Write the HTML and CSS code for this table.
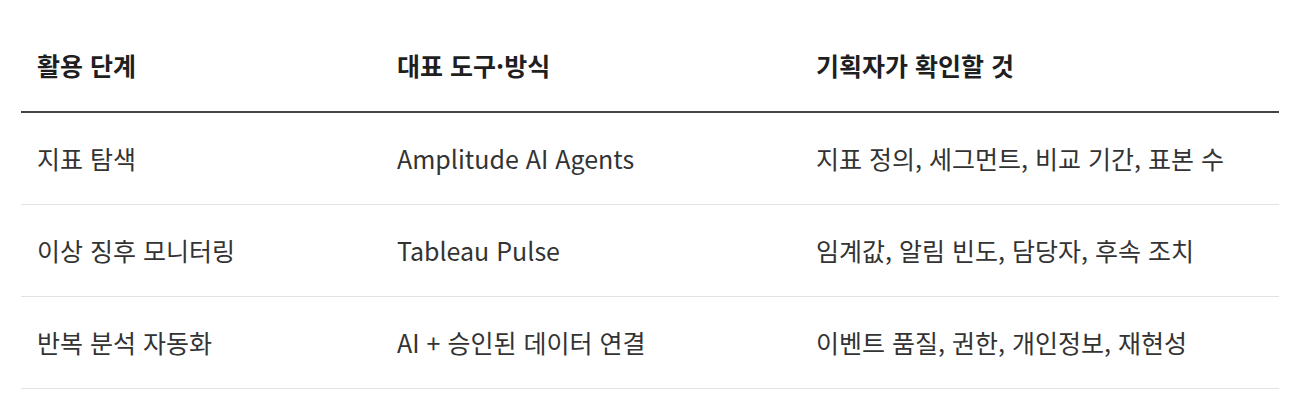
FILE: index.html
```html
<!DOCTYPE html>
<html lang="ko">
<head>
<meta charset="utf-8">
<link rel="stylesheet" href="styles.css">
</head>
<body>
<table class="tbl">
  <colgroup>
    <col class="c1"><col class="c2"><col class="c3">
  </colgroup>
  <thead>
    <tr><th>활용 단계</th><th>대표 도구·방식</th><th>기획자가 확인할 것</th></tr>
  </thead>
  <tbody>
    <tr><td>지표 탐색</td><td>Amplitude AI Agents</td><td>지표 정의, 세그먼트, 비교 기간, 표본 수</td></tr>
    <tr><td>이상 징후 모니터링</td><td>Tableau Pulse</td><td>임계값, 알림 빈도, 담당자, 후속 조치</td></tr>
    <tr><td>반복 분석 자동화</td><td>AI + 승인된 데이터 연결</td><td>이벤트 품질, 권한, 개인정보, 재현성</td></tr>
  </tbody>
</table>
</body>
</html>
```

FILE: styles.css
```css
html, body {
  margin: 0;
  padding: 0;
  background: #ffffff;
}
body {
  font-family: "Noto Sans CJK KR", "Noto Sans", sans-serif;
  color: #333333;
}
.tbl {
  margin: 20px 0 0 21px;
  width: 1258px;
  border-collapse: collapse;
  table-layout: fixed;
}
.c1 { width: 360px; }
.c2 { width: 419px; }
.c3 { width: 479px; }
.tbl th {
  text-align: left;
  font-weight: 700;
  font-size: 25px;
  line-height: 37px;
  color: #1f1f1f;
  padding: 27px 16px;
  border-bottom: 2px solid #444444;
}
.tbl td {
  font-size: 25px;
  line-height: 37px;
  color: #333333;
  padding: 27px 16px;
  border-bottom: 1px solid #e2e2e2;
}
```
